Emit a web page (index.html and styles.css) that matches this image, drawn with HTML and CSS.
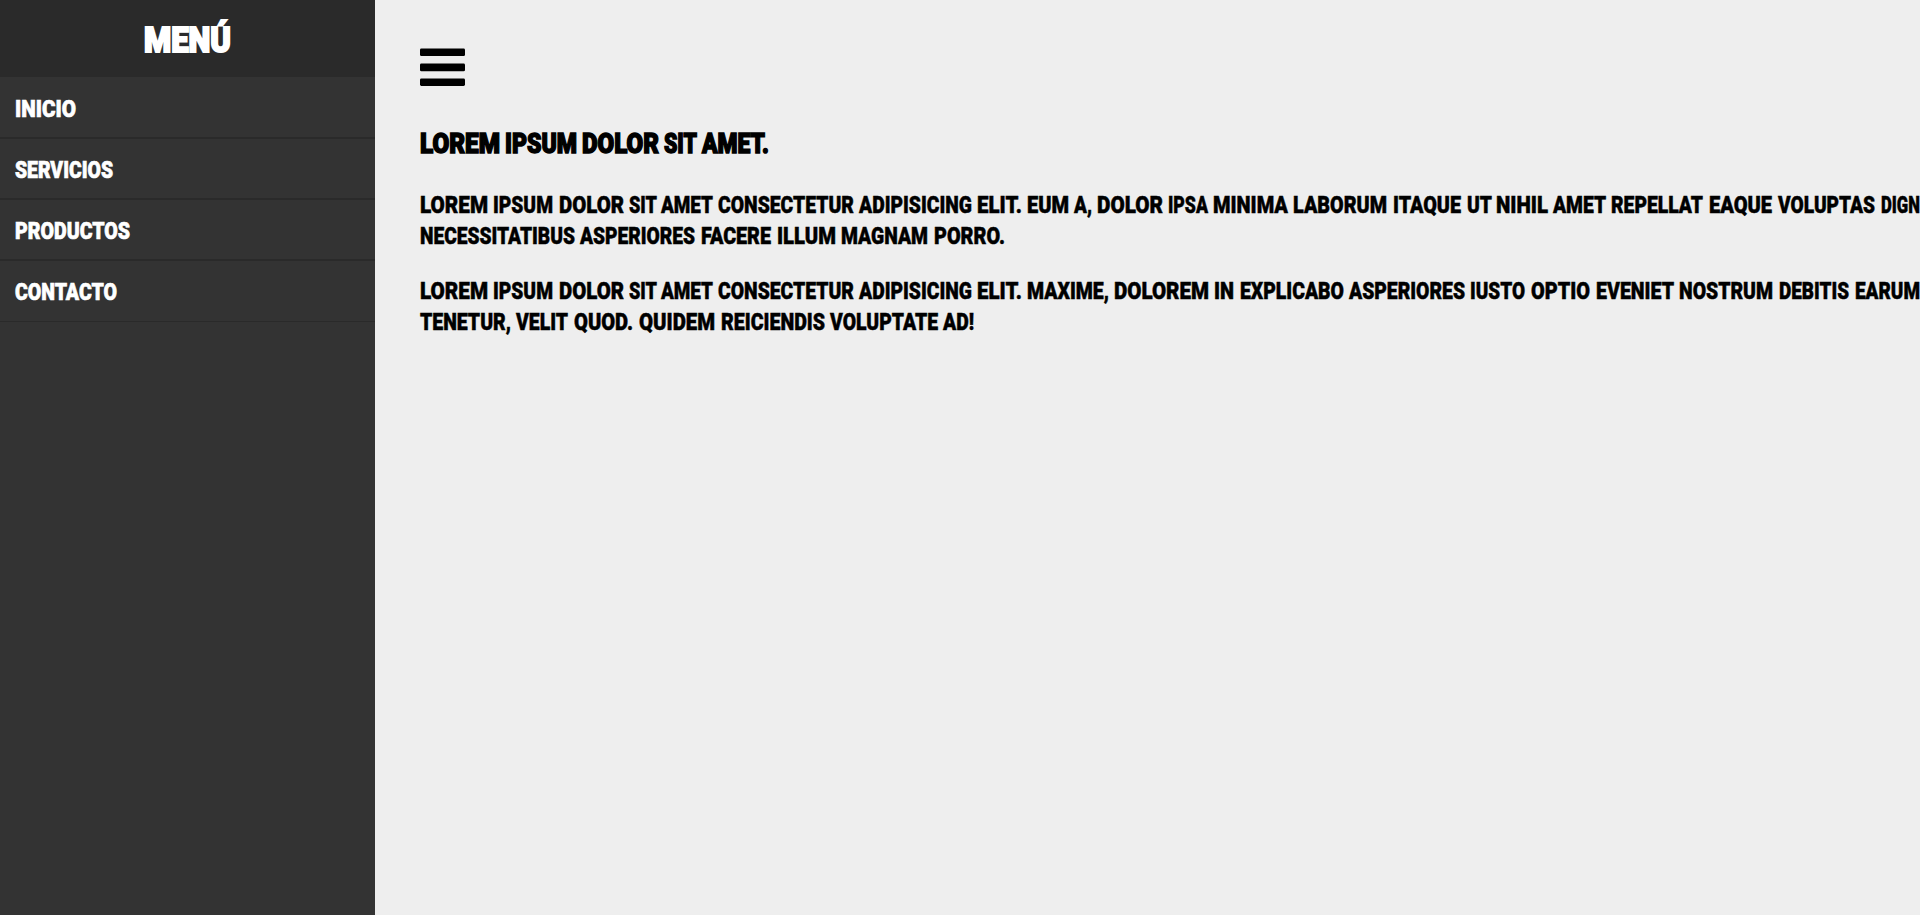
FILE: index.html
```html
<!DOCTYPE html>
<html lang="es">
<head>
<meta charset="utf-8">
<title>Menú</title>
<link rel="stylesheet" href="styles.css">
</head>
<body>
<div class="page">
  <nav class="sidebar">
    <h1 class="sidebar-title"><span class="line" data-fit="0 87">MENÚ</span></h1>
    <ul class="menu">
      <li class="menu-item"><span class="line" data-fit="0 61">INICIO</span></li>
      <li class="menu-item"><span class="line" data-fit="0 98">SERVICIOS</span></li>
      <li class="menu-item"><span class="line" data-fit="0 115">PRODUCTOS</span></li>
      <li class="menu-item"><span class="line" data-fit="0 102">CONTACTO</span></li>
    </ul>
  </nav>
  <main class="content">
    <svg class="bars" viewBox="0 0 45 38" width="45" height="38" aria-hidden="true">
      <rect x="0" y=".6" width="45" height="7.5" rx="1.4"/>
      <rect x="0" y="15.6" width="45" height="7.7" rx="1.4"/>
      <rect x="0" y="30.6" width="45" height="7.4" rx="1.4"/>
    </svg>
    <h2 class="heading"><span class="line" data-fit="0 80 85 157 162 239 244 277 282 349">LOREM IPSUM DOLOR SIT AMET.</span></h2>
    <p class="text">
      <span class="line" data-fit="0 68 73 133 139 204 209 237 241 293 298 434 439 552 557 602 607 649 654 672 677 743 748 788 793 868 873 967 973 1041 1047 1072 1076 1128 1133 1186 1191 1283 1289 1352 1358 1455 1461 1500">LOREM IPSUM DOLOR SIT AMET CONSECTETUR ADIPISICING ELIT. EUM A, DOLOR IPSA MINIMA LABORUM ITAQUE UT NIHIL AMET REPELLAT EAQUE VOLUPTAS DIGN</span>
      <span class="line" data-fit="0 155 160 275 281 351 357 416 421 508 514 585">NECESSITATIBUS ASPERIORES FACERE ILLUM MAGNAM PORRO.</span>
    </p>
    <p class="text">
      <span class="line" data-fit="0 68 73 133 139 204 209 237 241 293 298 434 439 552 557 602 607 689 694 789 794 814 820 924 929 1045 1050 1105 1111 1170 1176 1254 1259 1353 1359 1429 1435 1500">LOREM IPSUM DOLOR SIT AMET CONSECTETUR ADIPISICING ELIT. MAXIME, DOLOREM IN EXPLICABO ASPERIORES IUSTO OPTIO EVENIET NOSTRUM DEBITIS EARUM</span>
      <span class="line" data-fit="0 91 96 148 154 213 219 295 301 405 410 518 523 554">TENETUR, VELIT QUOD. QUIDEM REICIENDIS VOLUPTATE AD!</span>
    </p>
  </main>
</div>
<script src="fit.js"></script>
</body>
</html>
```
FILE: styles.css
```css
* { box-sizing: border-box; }
body {
  margin: 0;
  overflow: hidden;
  background: #eee;
  color: #000;
  font-family: Roboto, "Liberation Sans", sans-serif;
  font-weight: 900;
}
.page { display: flex; height: 915px; }
.sidebar { flex: 0 0 375px; background: #333; color: #fff; }
.sidebar-title {
  display: flex;
  justify-content: center;
  height: 77px;
  margin: 0;
  padding: 18px 0 0;
  background: #2a2a2a;
  font-size: 35px;
  font-weight: 900;
  line-height: 45px;
  -webkit-text-stroke: 2px currentColor;
}
.menu { margin: 0; padding: 0; list-style: none; }
.menu-item {
  height: 61px;
  padding: 15px 15px 0;
  border-top: 1px solid #2a2a2a;
  border-bottom: 1px solid #2a2a2a;
  font-size: 24px;
  line-height: 32px;
  -webkit-text-stroke: .7px currentColor;
}
.menu-item:first-child { border-top-color: #333; }
.menu-item:last-child { height: 62px; }
.content { flex: 1; min-width: 0; padding: 48px 0 0 45px; overflow: hidden; }
.bars { display: block; }
.heading {
  margin: 40px 0 0;
  font-size: 28px;
  font-weight: 900;
  line-height: 36px;
  -webkit-text-stroke: 1.5px currentColor;
}
.text {
  margin: 28px 0 0;
  font-size: 24px;
  line-height: 31px;
  -webkit-text-stroke: .5px currentColor;
}
.text + .text { margin-top: 24px; }
.line { display: flex; white-space: pre; }
.word { flex: none; }
.glyphs { display: inline-block; transform-origin: 0 50%; }
```
FILE: fit.js
```js
// Sets each word to the start and end offsets listed in its line's data-fit.
document.querySelectorAll(".line").forEach((line) => {
  const stops = line.dataset.fit.split(" ").map(Number);
  const words = line.textContent.trim().split(/\s+/);
  line.textContent = "";
  words.forEach((text, i) => {
    const word = document.createElement("span");
    const glyphs = document.createElement("span");
    word.className = "word";
    glyphs.className = "glyphs";
    glyphs.textContent = text;
    word.append(glyphs);
    line.append(word);
    const start = stops[2 * i];
    const end = stops[2 * i + 1];
    const next = i < words.length - 1 ? stops[2 * i + 2] : end;
    const natural = glyphs.getBoundingClientRect().width;
    glyphs.style.transform = `scaleX(${(end - start) / natural})`;
    word.style.width = `${next - start}px`;
    if (i < words.length - 1) glyphs.after(" ");
  });
});
```
